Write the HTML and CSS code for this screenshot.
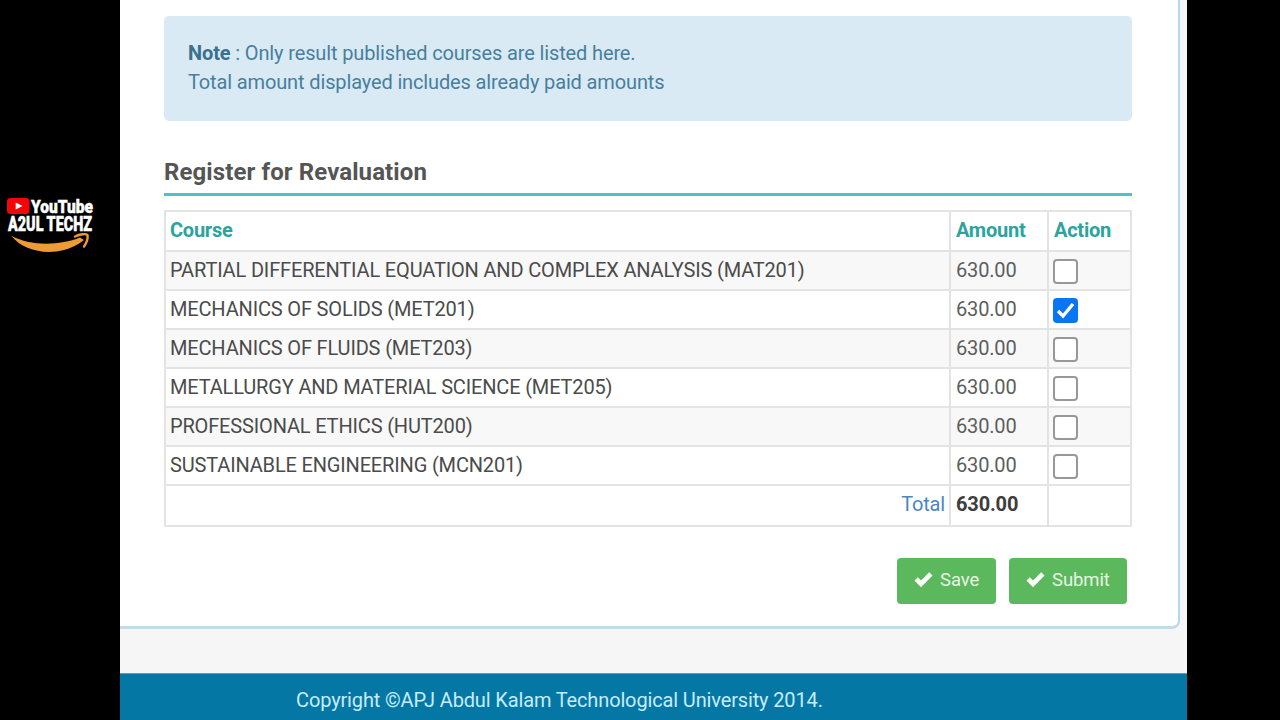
FILE: index.html
```
<!DOCTYPE html>
<html lang="en">
<head>
<meta charset="utf-8">
<title>Register for Revaluation</title>
<link rel="stylesheet" href="styles.css">
</head>
<body>
<div class="frame">
  <aside class="side">
    <svg class="brand" width="92" height="62" viewBox="0 0 92 62">
      <rect x="2" y="3" width="22.500" height="16" rx="3.500" fill="#f30509"/>
      <path d="M10.700 7.500L17.500 11L10.700 14.500Z" fill="#fff"/>
      <text class="brand-text" x="26" y="17.500" font-size="18" textLength="62" lengthAdjust="spacingAndGlyphs">YouTube</text>
      <text class="brand-text" x="3" y="36" font-size="19.500" textLength="84" lengthAdjust="spacingAndGlyphs">A2UL TECHZ</text>
      <path d="M6 40.500C24 51 54 51 75 42.500L79 45C58 62 22 61 6 40.500Z" fill="#ee9b35"/>
      <path d="M70 41.500C75 39 81 38.500 82.500 40C83 43 81.500 48 79 51.500" fill="none" stroke="#ee9b35" stroke-width="2.400" stroke-linecap="round" stroke-linejoin="round"/>
    </svg>
  </aside>
  <div class="screen">
    <main class="panel">
      <div class="note"><b class="note-label">Note</b> : Only result published courses are listed here.<br><span class="note-total">Total amount displayed includes already paid amounts</span></div>
      <h1 class="title"><span>Register for Revaluation</span></h1>
      <div class="table">
        <div class="row head"><div class="cell">Course</div><div class="cell">Amount</div><div class="cell">Action</div></div>
        <div class="row odd"><div class="cell">PARTIAL DIFFERENTIAL EQUATION AND COMPLEX ANALYSIS (MAT201)</div><div class="cell amount">630.00</div><div class="cell"><i class="box"></i></div></div>
        <div class="row"><div class="cell">MECHANICS OF SOLIDS (MET201)</div><div class="cell amount">630.00</div><div class="cell"><i class="box checked"><svg width="25" height="25" viewBox="0 0 25 25"><path d="M5 13L10 18L20 6" fill="none" stroke="#fff" stroke-width="3.400"/></svg></i></div></div>
        <div class="row odd"><div class="cell">MECHANICS OF FLUIDS (MET203)</div><div class="cell amount">630.00</div><div class="cell"><i class="box"></i></div></div>
        <div class="row"><div class="cell">METALLURGY AND MATERIAL SCIENCE (MET205)</div><div class="cell amount">630.00</div><div class="cell"><i class="box"></i></div></div>
        <div class="row odd"><div class="cell">PROFESSIONAL ETHICS (HUT200)</div><div class="cell amount">630.00</div><div class="cell"><i class="box"></i></div></div>
        <div class="row"><div class="cell">SUSTAINABLE ENGINEERING (MCN201)</div><div class="cell amount">630.00</div><div class="cell"><i class="box"></i></div></div>
        <div class="row total"><div class="cell label">Total</div><div class="cell sum">630.00</div><div class="cell"></div></div>
      </div>
      <div class="actions">
        <div class="button save"><svg width="19" height="16" viewBox="0 0 19 16"><path d="M0.500 8.500L3.800 5.200L7 8.500L15.200 0.300L18.500 3.600L7 15.200Z" fill="#fff"/></svg><span>Save</span></div>
        <div class="button submit"><svg width="19" height="16" viewBox="0 0 19 16"><path d="M0.500 8.500L3.800 5.200L7 8.500L15.200 0.300L18.500 3.600L7 15.200Z" fill="#fff"/></svg><span>Submit</span></div>
      </div>
    </main>
    <footer class="footer"><span>Copyright ©APJ Abdul Kalam Technological University 2014.</span></footer>
  </div>
</div>
</body>
</html>
```
FILE: styles.css
```
* { box-sizing: border-box; }
body { margin: 0; background: #000; font-family: Roboto, "Liberation Sans", sans-serif; font-size: 20px; }
.frame { width: 1280px; height: 720px; display: flex; overflow: hidden; background: #000; }
.side { width: 120px; padding: 195px 0 0 5px; }
.brand { display: block; overflow: visible; }
.brand-text { fill: #fff; stroke: #fff; stroke-width: 0.5px; font-family: Roboto, sans-serif; font-weight: 900; }
.screen { width: 1067px; height: 720px; display: flex; flex-direction: column; background: #f6f6f6; }
.panel { width: 1060px; height: 629px; padding: 16px 0 0 44px; background: #fff; border-right: 2px solid #b6d8eb; border-bottom: 3px solid #c4dbe9; border-bottom-right-radius: 8px; }
.note { width: 968px; height: 105px; padding: 23px 24px; border-radius: 5px; background: #d9eaf4; color: #477f9f; line-height: 29px; letter-spacing: -0.135px; white-space: nowrap; }
.note-label { color: #39718f; }
.title { width: 968px; height: 75px; margin: 0; padding-top: 37px; border-bottom: 3px solid #4fc2c4; color: #555; font-size: 24px; letter-spacing: 0.1px; line-height: 28px; font-weight: 700; white-space: nowrap; }
.table { width: 968px; margin-top: 14px; border: 2px solid #e4e4e4; border-bottom: 0; color: #4b4b4b; letter-spacing: -0.16px; }
.row { display: grid; grid-template-columns: 785px 98px 81px; height: 39px; border-bottom: 2px solid #e3e3e3; line-height: 37px; white-space: nowrap; }
.row.odd { background: #f8f8f8; }
.cell { padding-left: 4px; border-right: 2px solid #e3e3e3; }
.cell + .cell { padding-left: 5px; }
.cell:last-child { border-right: 0; }
.head { height: 40px; color: #2ba49d; font-weight: 700; letter-spacing: -0.25px; }
.amount { color: #5d5d5d; }
.box { display: block; width: 25px; height: 25px; margin: 7px 0 0 -1px; border: 2px solid #989898; border-radius: 4px; background: #fff; }
.checked { border: 0; background: #0875f5; }
.checked svg { display: block; }
.total { height: 41px; line-height: 37px; }
.label { padding-right: 4px; text-align: right; color: #4c86bd; }
.sum { font-weight: 700; color: #3d3d3d; }
.actions { display: flex; gap: 13px; padding: 31px 0 0 733px; }
.button { display: flex; align-items: center; height: 46px; padding: 0 0 2px 17px; gap: 7px; border-radius: 4px; background: #5cb85c; color: #e5f7e3; font-size: 18.5px; letter-spacing: -0.1px; }
.save { width: 99px; }
.submit { width: 118px; }
.footer { height: 47px; margin-top: auto; padding: 1px 0 0 176px; border-top: 1px solid #5d9bb4; background: #0577a5; color: #c6ecfb; line-height: 50px; letter-spacing: -0.14px; white-space: nowrap; }
```
